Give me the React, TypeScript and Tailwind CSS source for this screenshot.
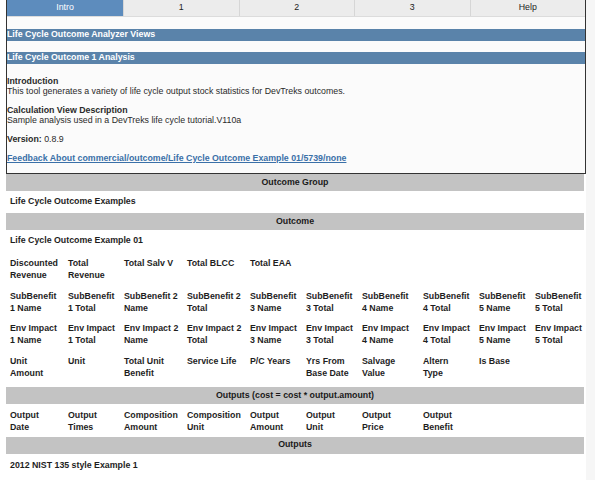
import * as React from "react";

const tabs = ["Intro", "1", "2", "3", "Help"];

const rows: string[][][] = [
  [
    ["Discounted", "Revenue"],
    ["Total", "Revenue"],
    ["Total Salv V"],
    ["Total BLCC"],
    ["Total EAA"],
  ],
  [
    ["SubBenefit", "1 Name"],
    ["SubBenefit", "1 Total"],
    ["SubBenefit 2", "Name"],
    ["SubBenefit 2", "Total"],
    ["SubBenefit", "3 Name"],
    ["SubBenefit", "3 Total"],
    ["SubBenefit", "4 Name"],
    ["SubBenefit", "4 Total"],
    ["SubBenefit", "5 Name"],
    ["SubBenefit", "5 Total"],
  ],
  [
    ["Env Impact", "1 Name"],
    ["Env Impact", "1 Total"],
    ["Env Impact 2", "Name"],
    ["Env Impact 2", "Total"],
    ["Env Impact", "3 Name"],
    ["Env Impact", "3 Total"],
    ["Env Impact", "4 Name"],
    ["Env Impact", "4 Total"],
    ["Env Impact", "5 Name"],
    ["Env Impact", "5 Total"],
  ],
  [
    ["Unit", "Amount"],
    ["Unit"],
    ["Total Unit", "Benefit"],
    ["Service Life"],
    ["P/C Years"],
    ["Yrs From", "Base Date"],
    ["Salvage", "Value"],
    ["Altern", "Type"],
    ["Is Base"],
  ],
];

const outputCols: string[][] = [
  ["Output", "Date"],
  ["Output", "Times"],
  ["Composition", "Amount"],
  ["Composition", "Unit"],
  ["Output", "Amount"],
  ["Output", "Unit"],
  ["Output", "Price"],
  ["Output", "Benefit"],
];

const GRID =
  "grid grid-cols-[58px_56px_63px_63px_56px_56px_61px_56px_56px_1fr] pl-[4px]";

const Cells: React.FC<{ cols: string[][] }> = ({ cols }) => (
  <div className={`${GRID} h-[32.5px] pt-[5px]`}>
    {cols.map((c, i) => (
      <div key={i} className="leading-[12px]">
        {c.map((l, j) => (
          <div key={j} className="whitespace-nowrap">
            {l}
          </div>
        ))}
      </div>
    ))}
  </div>
);

const GrayBar: React.FC<{ children: React.ReactNode; className?: string }> = ({
  children,
  className = "",
}) => (
  <div
    className={`flex h-[17px] items-center justify-center bg-[#c3c3c3] text-[#1a1a1a] ${className}`}
  >
    {children}
  </div>
);

export default function App() {
  return (
    <div className="h-[480px] w-[595px] overflow-hidden bg-[#f6f6f6] font-['Liberation_Sans',Arial,sans-serif] text-[8.8px]">
      <div className="h-full w-[586px] bg-white">
        {/* intro box */}
        <div className="ml-[6px] border-l border-r border-b border-[#333] bg-[#fbfbfb]">
          <div className="flex h-[17px] border-b border-[#dcdcdc] bg-[#ececec] text-[#222]">
            {tabs.map((t, i) => (
              <div
                key={t}
                className={
                  i === 0
                    ? "flex w-[116px] items-center justify-center bg-[#5d8cbd] text-white"
                    : "flex flex-1 items-center justify-center border-l border-[#d6d6d6]"
                }
              >
                {t}
              </div>
            ))}
          </div>
          <div className="pt-[12px]">
            <div className="flex h-[12px] items-center bg-[#5a83aa] font-bold text-white">
              Life Cycle Outcome Analyzer Views
            </div>
            <div className="mt-[11px] flex h-[12px] items-center bg-[#5a83aa] font-bold text-white">
              Life Cycle Outcome 1 Analysis
            </div>
            <div className="mt-[12px] pb-[10px] leading-[10px] text-[#2a2a2a]">
              <div className="font-bold">Introduction</div>
              <div>
                This tool generates a variety of life cycle output stock
                statistics for DevTreks outcomes.
              </div>
              <div className="mt-[9px] font-bold">Calculation View Description</div>
              <div>Sample analysis used in a DevTreks life cycle tutorial.V110a</div>
              <div className="mt-[9px]">
                <span className="font-bold">Version:</span> 0.8.9
              </div>
              <div className="mt-[9px]">
                <a href="#" className="font-bold text-[#3a70a8] underline">
                  Feedback About commercial/outcome/Life Cycle Outcome Example
                  01/5739/none
                </a>
              </div>
            </div>
          </div>
        </div>

        {/* data section */}
        <div className="ml-[6px] mr-[2px] font-bold text-[#1e1e1e]">
          <GrayBar>Outcome Group</GrayBar>
          <div className="flex h-[22px] items-center pl-[4px]">
            Life Cycle Outcome Examples
          </div>
          <GrayBar>Outcome</GrayBar>
          <div className="flex h-[22px] items-center pl-[4px]">
            Life Cycle Outcome Example 01
          </div>
          {rows.map((r, i) => (
            <Cells key={i} cols={r} />
          ))}
          <GrayBar className="mt-[5px]">
            Outputs (cost = cost * output.amount)
          </GrayBar>
          <Cells cols={outputCols} />
          <GrayBar>Outputs</GrayBar>
          <div className="flex h-[24px] items-center pl-[4px]">
            2012 NIST 135 style Example 1
          </div>
        </div>
      </div>
    </div>
  );
}
